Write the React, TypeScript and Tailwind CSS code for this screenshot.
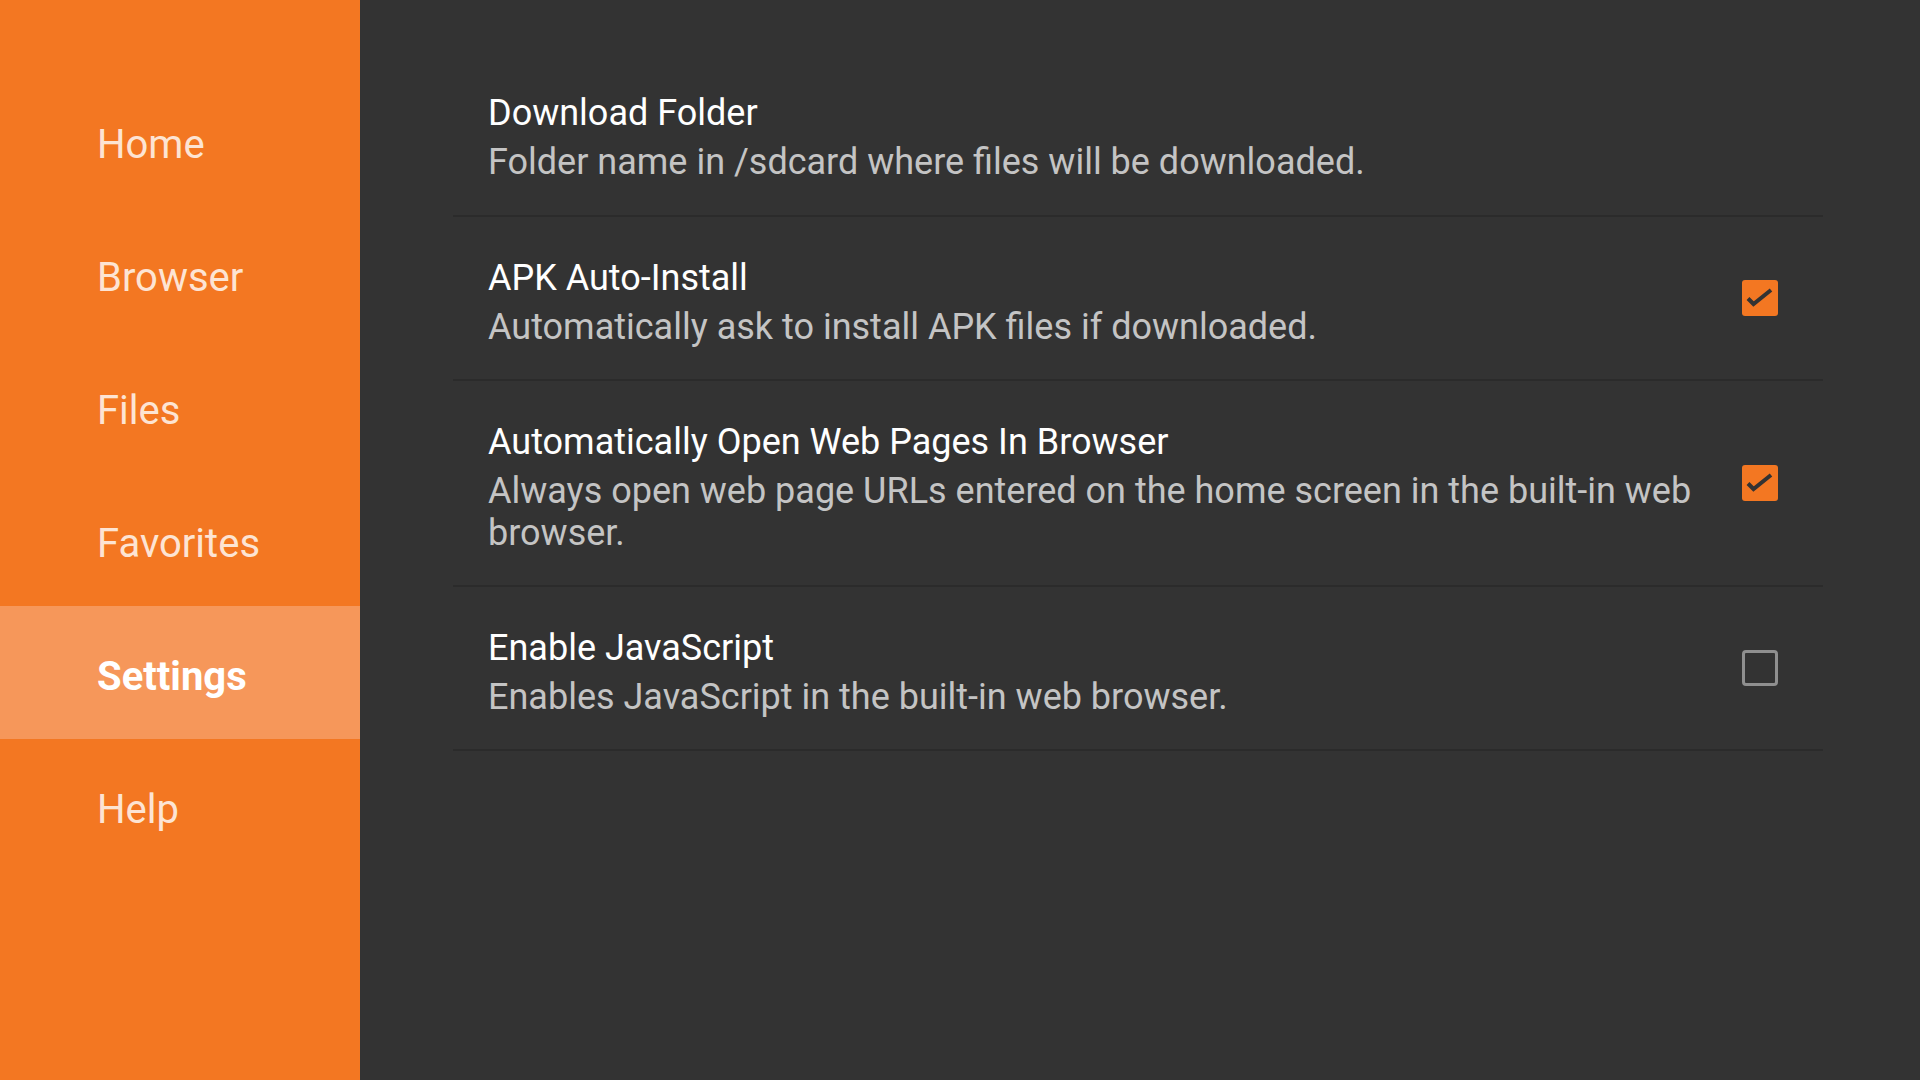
import React from "react";

const navItems = ["Home", "Browser", "Files", "Favorites", "Settings", "Help"];

const settings = [
  {
    title: "Download Folder",
    desc: "Folder name in /sdcard where files will be downloaded.",
    check: null as null | boolean,
  },
  {
    title: "APK Auto-Install",
    desc: "Automatically ask to install APK files if downloaded.",
    check: true,
  },
  {
    title: "Automatically Open Web Pages In Browser",
    desc: "Always open web page URLs entered on the home screen in the built-in web browser.",
    check: true,
  },
  {
    title: "Enable JavaScript",
    desc: "Enables JavaScript in the built-in web browser.",
    check: false,
  },
];

function Checkbox({ checked }: { checked: boolean }) {
  if (checked) {
    return (
      <div className="w-[36px] h-[36px] rounded-[3px] bg-[#f37722] shrink-0 mb-[7px]">
        <svg width="36" height="36" viewBox="0 0 36 36" fill="none">
          <path d="M6 18.5l5.5 5.5 17.5-14" stroke="#333333" strokeWidth="4" strokeLinecap="butt" strokeLinejoin="miter" />
        </svg>
      </div>
    );
  }
  return <div className="w-[36px] h-[36px] rounded-[4px] border-[3px] border-[#8f8f8f] shrink-0 mb-[7px]" />;
}

export default function App() {
  return (
    <div className="flex w-[1920px] h-[1080px] bg-[#333333] overflow-hidden" style={{ fontFamily: "Roboto, 'Noto Sans', sans-serif" }}>
      <nav className="w-[360px] shrink-0 bg-[#f37722] pt-[74px] flex flex-col">
        {navItems.map((n) => {
          const active = n === "Settings";
          return (
            <div
              key={n}
              className={
                active
                  ? "h-[133px] flex items-center pl-[97px] pt-[8px] bg-[#f6975a] text-white font-bold text-[40px]"
                  : "h-[133px] flex items-center pl-[97px] pt-[8px] text-[#fde4d3] text-[40px]"
              }
            >
              {n}
            </div>
          );
        })}
      </nav>
      <main className="flex-1 pt-[51px] pl-[93px] pr-[97px]">
        {settings.map((s, i) => (
          <div
            key={s.title}
            className={
              i === 0
                ? "flex items-center pl-[35px] pr-[45px] pt-[38px] pb-[32px] border-b-2 border-[#2b2b2b]"
                : "flex items-center pl-[35px] pr-[45px] pt-[37px] pb-[31px] border-b-2 border-[#2b2b2b]"
            }
          >
            <div className="flex-1 min-w-0 pr-[40px]">
              <div className="text-white text-[36px] leading-[48px]">{s.title}</div>
              <div className="text-[#c4c4c4] text-[36px] leading-[42px] mt-[4px]">{s.desc}</div>
            </div>
            {s.check !== null && <Checkbox checked={s.check} />}
          </div>
        ))}
      </main>
    </div>
  );
}
